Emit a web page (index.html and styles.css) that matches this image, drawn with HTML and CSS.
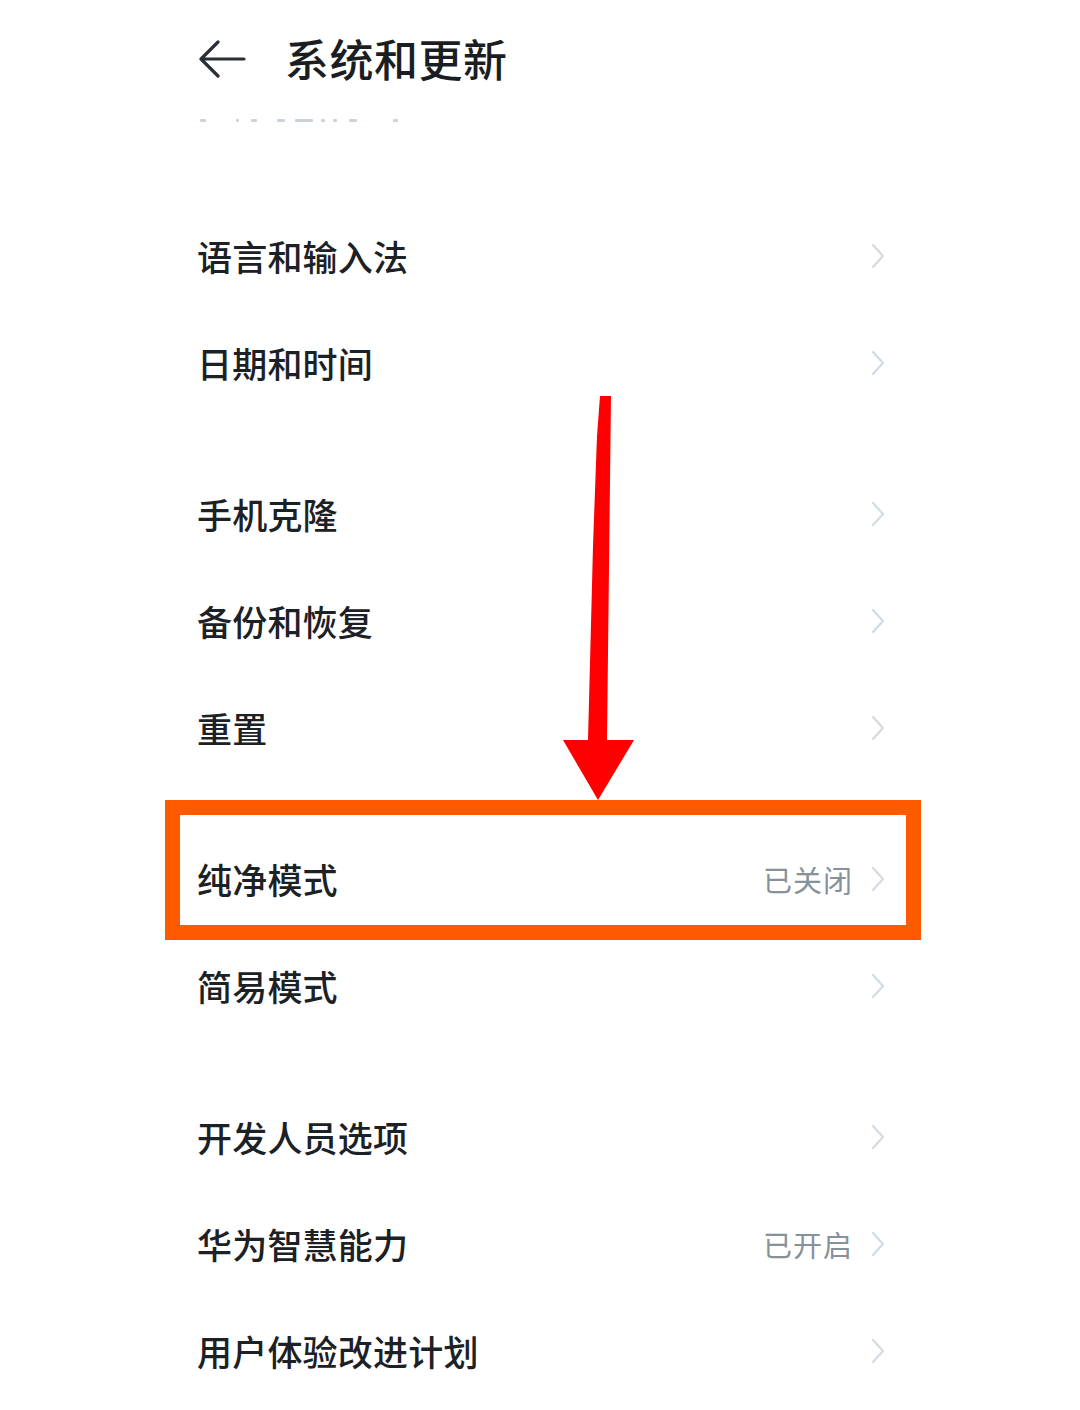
FILE: index.html
```html
<!DOCTYPE html>
<html lang="zh">
<head>
<meta charset="utf-8">
<link rel="stylesheet" href="styles.css">
</head>
<body>
<div class="page">
  <header class="header">
    <svg class="back" width="48" height="40" viewBox="0 0 48 40">
      <path d="M46 19 H4 M20 2 L3 19 L20 36" fill="none" stroke="#2a3035" stroke-width="3.2" stroke-linecap="round" stroke-linejoin="round"/>
    </svg>
    <h1 class="title">系统和更新</h1>
  </header>
  <div class="faded">
    <i class="d1"></i><i class="d2"></i><i class="d3"></i><i class="d4"></i><i class="d5"></i><i class="d6"></i><i class="d7"></i><i class="d8"></i><i class="d9"></i>
  </div>

  <div class="group">
    <div class="row"><span class="label">语言和输入法</span><span class="right"><svg class="chev" viewBox="0 0 14 26"><path d="M2 2 L12 13 L2 24" fill="none" stroke="#d3dbe2" stroke-width="2.2" stroke-linecap="round" stroke-linejoin="round"/></svg></span></div>
    <div class="row"><span class="label">日期和时间</span><span class="right"><svg class="chev" viewBox="0 0 14 26"><path d="M2 2 L12 13 L2 24" fill="none" stroke="#d3dbe2" stroke-width="2.2" stroke-linecap="round" stroke-linejoin="round"/></svg></span></div>
  </div>

  <div class="group">
    <div class="row"><span class="label">手机克隆</span><span class="right"><svg class="chev" viewBox="0 0 14 26"><path d="M2 2 L12 13 L2 24" fill="none" stroke="#d3dbe2" stroke-width="2.2" stroke-linecap="round" stroke-linejoin="round"/></svg></span></div>
    <div class="row"><span class="label">备份和恢复</span><span class="right"><svg class="chev" viewBox="0 0 14 26"><path d="M2 2 L12 13 L2 24" fill="none" stroke="#d3dbe2" stroke-width="2.2" stroke-linecap="round" stroke-linejoin="round"/></svg></span></div>
    <div class="row"><span class="label">重置</span><span class="right"><svg class="chev" viewBox="0 0 14 26"><path d="M2 2 L12 13 L2 24" fill="none" stroke="#d3dbe2" stroke-width="2.2" stroke-linecap="round" stroke-linejoin="round"/></svg></span></div>
  </div>

  <div class="group">
    <div class="row"><span class="label">纯净模式</span><span class="right"><span class="value">已关闭</span><svg class="chev" viewBox="0 0 14 26"><path d="M2 2 L12 13 L2 24" fill="none" stroke="#d3dbe2" stroke-width="2.2" stroke-linecap="round" stroke-linejoin="round"/></svg></span></div>
    <div class="row"><span class="label">简易模式</span><span class="right"><svg class="chev" viewBox="0 0 14 26"><path d="M2 2 L12 13 L2 24" fill="none" stroke="#d3dbe2" stroke-width="2.2" stroke-linecap="round" stroke-linejoin="round"/></svg></span></div>
  </div>

  <div class="group">
    <div class="row"><span class="label">开发人员选项</span><span class="right"><svg class="chev" viewBox="0 0 14 26"><path d="M2 2 L12 13 L2 24" fill="none" stroke="#d3dbe2" stroke-width="2.2" stroke-linecap="round" stroke-linejoin="round"/></svg></span></div>
    <div class="row"><span class="label">华为智慧能力</span><span class="right"><span class="value">已开启</span><svg class="chev" viewBox="0 0 14 26"><path d="M2 2 L12 13 L2 24" fill="none" stroke="#d3dbe2" stroke-width="2.2" stroke-linecap="round" stroke-linejoin="round"/></svg></span></div>
    <div class="row"><span class="label">用户体验改进计划</span><span class="right"><svg class="chev" viewBox="0 0 14 26"><path d="M2 2 L12 13 L2 24" fill="none" stroke="#d3dbe2" stroke-width="2.2" stroke-linecap="round" stroke-linejoin="round"/></svg></span></div>
  </div>

  <div class="highlight"></div>
  <svg class="arrow" width="80" height="410" viewBox="0 0 80 410">
    <polygon points="39,0 50,0 46,344 73,344 37,404 2,344 27,344 32,150 36,40" fill="#ff0000"/>
  </svg>
</div>
</body>
</html>
```

FILE: styles.css
```css
html, body {
  margin: 0;
  padding: 0;
  background: #ffffff;
}

.page {
  position: relative;
  width: 1080px;
  height: 1410px;
  overflow: hidden;
  font-family: "Noto Sans CJK SC", "Noto Sans", sans-serif;
  color: #1c2126;
}

.header {
  height: 118px;
  display: flex;
  align-items: center;
  padding-left: 198px;
  gap: 39px;
}

.back {
  display: block;
  margin-top: 2px;
}

.title {
  margin: 0 0 2px 0;
  font-size: 44px;
  font-weight: 500;
  letter-spacing: 0.5px;
  color: #1a1e22;
}

.faded {
  display: flex;
  align-items: center;
  height: 4px;
  margin-left: 200px;
  margin-bottom: 80px;
}

.faded i {
  display: block;
  height: 3px;
  background: #c9d3da;
  border-radius: 1px;
  margin-right: 14px;
}

.faded .d1 { width: 6px; margin-right: 30px; }
.faded .d2 { width: 3px; margin-right: 12px; }
.faded .d3 { width: 6px; margin-right: 20px; }
.faded .d4 { width: 8px; margin-right: 10px; }
.faded .d5 { width: 18px; margin-right: 8px; }
.faded .d6 { width: 4px; margin-right: 8px; }
.faded .d7 { width: 4px; margin-right: 12px; }
.faded .d8 { width: 8px; margin-right: 36px; }
.faded .d9 { width: 5px; }

.group {
  display: flex;
  flex-direction: column;
  margin-bottom: 44px;
}

.row {
  height: 107px;
  display: flex;
  align-items: center;
  justify-content: space-between;
  padding: 0 195px 0 197px;
}

.label {
  font-size: 35px;
  font-weight: 500;
  letter-spacing: 0.2px;
  color: #1c2126;
}

.right {
  display: flex;
  align-items: center;
  gap: 18px;
}

.value {
  font-size: 29px;
  color: #87919a;
  letter-spacing: 1px;
}

.chev {
  width: 14px;
  height: 26px;
  display: block;
}

.highlight {
  position: absolute;
  left: 165px;
  top: 800px;
  width: 756px;
  height: 140px;
  box-sizing: border-box;
  border: 15px solid #ff5a00;
}

.arrow {
  position: absolute;
  left: 561px;
  top: 396px;
}
```
